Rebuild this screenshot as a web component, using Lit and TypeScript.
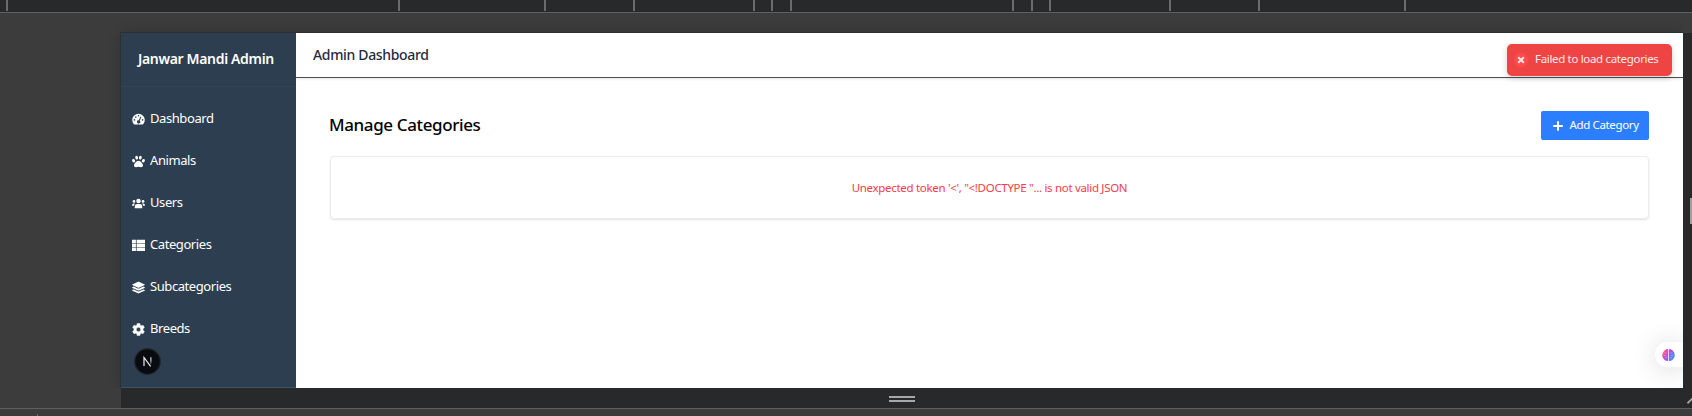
import { LitElement, html, css, svg } from "lit";
import { customElement } from "lit/decorators.js";

const TICKS = [6, 398, 544, 633, 753, 771, 790, 1012, 1031, 1049, 1169, 1258, 1404];

const ICONS: Record<string, unknown> = {
  gauge: svg`<path fill-rule="evenodd" d="M2 13.5A7.7 7.7 0 1 1 14 13.5Q13.600 14 13 14H3Q2.400 14 2 13.500ZM2 8.500a1 1 0 1 0 2 0a1 1 0 1 0-2 0M3.700 5a1 1 0 1 0 2 0a1 1 0 1 0-2 0M7 3.400a1 1 0 1 0 2 0a1 1 0 1 0-2 0M12 8.500a1 1 0 1 0 2 0a1 1 0 1 0-2 0M10.500 4.300L8.300 9A2 2 0 1 0 9.500 9.500L11.600 4.900Z"/>`,
  paw: svg`<ellipse cx="2" cy="7" rx="1.700" ry="2.200" transform="rotate(-22 2 7)"/><ellipse cx="5.700" cy="3.300" rx="1.700" ry="2.400" transform="rotate(-8 5.700 3.300)"/><ellipse cx="10.300" cy="3.300" rx="1.700" ry="2.400" transform="rotate(8 10.300 3.300)"/><ellipse cx="14" cy="7" rx="1.700" ry="2.200" transform="rotate(22 14 7)"/><path d="M8 7C5.500 7 2.500 10.500 2.500 13C2.500 15.600 5.500 15 8 14.500C10.500 15 13.500 15.600 13.500 13C13.500 10.500 10.500 7 8 7Z"/>`,
  users: svg`<circle cx="8" cy="5" r="2.800"/><circle cx="2.400" cy="5.500" r="1.700"/><circle cx="13.600" cy="5.500" r="1.700"/><path d="M3.400 13.800V12Q3.400 8.600 6.500 8.600H9.500Q12.600 8.600 12.600 12V13.800ZM0 10.700Q0 8 2 8H3.800Q2.600 9.300 2.400 10.700H0ZM16 10.700Q16 8 14 8H12.200Q13.400 9.300 13.600 10.700H16Z"/>`,
  list: svg`<path d="M0 1h4.800v4.100H0zM5.700 1H16v4.100H5.700zM0 5.900h4.800v4.100H0zM5.700 5.900H16v4.100H5.700zM0 10.800h4.800v4.100H0zM5.700 10.800H16v4.100H5.700z"/>`,
  layers: svg`<path d="M.4 4.200L7.500.9Q8 .7 8.500.9L15.600 4.200Q16.200 4.600 15.600 5L8.500 8.200Q8 8.400 7.500 8.200L.4 5Q-.2 4.600.4 4.200ZM.4 7.700L2.200 6.900L7 9.100Q8 9.500 9 9.100L13.800 6.900L15.600 7.700Q16.200 8.100 15.600 8.500L8.500 11.700Q8 11.900 7.500 11.700L.4 8.500Q-.2 8.100.4 7.700ZM.4 11.200L2.200 10.400L7 12.600Q8 13 9 12.600L13.800 10.400L15.600 11.200Q16.200 11.600 15.600 12L8.500 15.200Q8 15.400 7.500 15.200L.4 12Q-.2 11.600.4 11.200Z"/>`,
  gear: svg`<path fill-rule="evenodd" stroke="#fff" stroke-width=".6" stroke-linejoin="round" d="M6.400.5h3.200l.5 2.200 1.300.8 2.200-.7 1.600 2.800-1.700 1.600v1.600l1.700 1.600-1.600 2.800-2.200-.7-1.300.8-.5 2.200H6.400l-.5-2.200-1.300-.8-2.200.7-1.600-2.800 1.700-1.600V7.200L.8 5.600l1.600-2.800 2.200.7 1.300-.8ZM5.300 8a2.700 2.700 0 1 0 5.400 0a2.700 2.700 0 1 0-5.400 0"/>`,
};

const NAV = [
  { label: "Dashboard", icon: "gauge" },
  { label: "Animals", icon: "paw" },
  { label: "Users", icon: "users" },
  { label: "Categories", icon: "list" },
  { label: "Subcategories", icon: "layers" },
  { label: "Breeds", icon: "gear" },
];

@customElement("admin-sidebar")
class AdminSidebar extends LitElement {
  static styles = css`
    :host { display: flex; flex-direction: column; width: 175px; background: #2d3e50; color: #fff; box-sizing: border-box; border-bottom: 1px solid #3c5268; position: relative; }
    .brand { box-sizing: border-box; height: 54px; padding: 0 0 2px 17px; display: flex; align-items: center; border-bottom: 1px solid #344252; font-size: 14px; font-weight: 600; letter-spacing: -0.34px; white-space: nowrap; }
    nav { padding-top: 10px; }
    .item { height: 42px; padding-left: 11px; display: flex; align-items: center; gap: 5px; font-size: 13px; letter-spacing: -0.42px; }
    .item svg { width: 13px; height: 13px; fill: #fff; position: relative; top: 1px; }
    .dev { position: absolute; left: 13px; top: 315px; width: 27px; height: 27px; }
  `;
  render() {
    return html`<div class="brand">Janwar Mandi Admin</div>
      <nav>${NAV.map((n) => html`<div class="item"><svg viewBox="0 0 16 16">${ICONS[n.icon]}</svg><span>${n.label}</span></div>`)}</nav>
      <svg class="dev" viewBox="0 0 27 27">
        <defs><linearGradient id="n" gradientUnits="userSpaceOnUse" x1="0" y1="9" x2="0" y2="17"><stop offset=".4" stop-color="#ccc"/><stop offset="1" stop-color="#ccc" stop-opacity=".1"/></linearGradient></defs>
        <circle cx="13.500" cy="13.500" r="12.900" fill="#080b0f" stroke="#252a2e" stroke-width="1.200"/>
        <path d="M10 18V9.500L16.600 18.300" fill="none" stroke="#eee" stroke-width="1.200"/>
        <path d="M16.300 9.200h1.200v7.300h-1.200z" fill="url(#n)"/>
      </svg>`;
  }
}

@customElement("app-root")
class AppRoot extends LitElement {
  static styles = css`
    :host { display: flex; flex-direction: column; height: 416px; overflow: hidden; position: relative; background: #3c3c3c; font-family: "Noto Sans", "Open Sans", sans-serif; }
    .ruler { box-sizing: border-box; height: 13px; flex: none; background: #28292b; border-bottom: 1px solid #5f6060; position: relative; }
    .tick { position: absolute; top: 0; width: 2px; height: 11px; background: #6b6b6b; }
    .stage { display: grid; grid-template-columns: 1562px 9px; grid-template-rows: 355px 20px; margin: 20px 0 0 121px; flex: none; }
    .page { display: flex; background: #fff; position: relative; box-shadow: 0 0 0 1px #2f2f30, 0 0 12px rgba(0,0,0,.18); clip-path: inset(-14px 0 0 -14px); }
    .main { flex: 1; min-width: 0; position: relative; overflow: hidden; }
    header { box-sizing: border-box; height: 45px; border-bottom: 1px solid #4b4c4c; padding: 0 0 1px 17px; display: flex; align-items: center; font-size: 14px; font-weight: 500; color: #1f2c3e; letter-spacing: -0.34px; box-shadow: 0 1px 3px rgba(0,0,0,.1); }
    .content { padding: 33px 34px 0; }
    .bar { display: flex; justify-content: space-between; height: 45px; align-items: flex-start; }
    h1 { margin: 0 0 0 -1px; font-size: 17px; line-height: 27px; font-weight: 500; color: #000; letter-spacing: -0.38px; }
    .add { box-sizing: border-box; width: 108.5px; height: 28.5px; border-radius: 2px; background: #2b7fff; color: #fff; font-size: 11.5px; letter-spacing: -0.36px; display: flex; align-items: center; padding: 0 0 2px 12px; gap: 7px; white-space: nowrap; }
    .add svg { width: 10px; height: 10px; position: relative; top: 2px; }
    .card { box-sizing: border-box; height: 63px; border: 1px solid #ececec; border-radius: 4px; box-shadow: 0 1px 2px rgba(0,0,0,.12); display: flex; align-items: center; justify-content: center; padding-bottom: 1px; color: #fb3b45; font-size: 11.5px; letter-spacing: -0.31px; white-space: nowrap; }
    .toast { position: absolute; right: 11px; top: 11px; width: 165px; height: 32px; box-sizing: border-box; border-radius: 5px; background: #ef4444; color: #fdebeb; font-size: 11.5px; letter-spacing: -0.33px; display: flex; align-items: center; gap: 7px; padding: 0 0 3px 7px; white-space: nowrap; box-shadow: 0 2px 6px rgba(0,0,0,.18); }
    .toast svg { width: 14px; height: 14px; position: relative; top: 1px; flex: none; }
    .brain { position: absolute; right: 0; top: 309px; width: 28px; height: 25px; border-radius: 13px 0 0 13px; background: #fff; box-shadow: 0 2px 26px rgba(0,0,0,.16); display: flex; align-items: center; padding-left: 7px; box-sizing: border-box; }
    .brain svg { width: 13px; height: 14px; }
    .side { background: #28292b; display: flex; align-items: center; justify-content: flex-end; }
    .grip { width: 2px; height: 26px; background: #a0a0a0; margin-top: 1px; }
    .bottom { grid-column: 1 / 3; background: #28292b; position: relative; display: flex; flex-direction: column; align-items: center; gap: 2px; padding: 8px 9px 0 0; }
    .line { width: 26px; height: 2px; background: #a7a7a7; }
    .corner { position: absolute; right: 0; top: 9px; width: 5px; height: 7px; }
    .foot { flex: 1; border-top: 1px solid #5f6060; }
    .foot i { display: block; width: 1px; height: 2px; background: #6b6b6b; margin: 5px 0 0 37px; }
  `;
  render() {
    return html`<div class="ruler">${TICKS.map((x) => html`<i class="tick" style="left:${x}px"></i>`)}</div>
      <div class="stage">
        <div class="page">
          <admin-sidebar></admin-sidebar>
          <div class="main">
            <header>Admin Dashboard</header>
            <div class="content">
              <div class="bar"><h1>Manage Categories</h1>
                <div class="add"><svg viewBox="0 0 10 10"><path d="M5 .2v9.600M.2 5h9.600" stroke="#fff" stroke-width="2"/></svg><span>Add Category</span></div>
              </div>
              <div class="card"><span>Unexpected token '&lt;', "&lt;!DOCTYPE "... is not valid JSON</span></div>
            </div>
            <div class="toast"><svg viewBox="0 0 14 14"><circle cx="7" cy="7" r="7" fill="#ff4b4b"/><path d="M4.200 4.200l5.600 5.600M9.800 4.200L4.200 9.800" stroke="#ffe6e6" stroke-width="2"/></svg><span>Failed to load categories</span></div>
            <div class="brain"><svg viewBox="0 0 14 14">
              <defs><linearGradient id="b" gradientUnits="userSpaceOnUse" x1="0" y1="2" x2="14" y2="10"><stop offset="0" stop-color="#ffa23c"/><stop offset=".28" stop-color="#ee45b4"/><stop offset=".58" stop-color="#8a5cf0"/><stop offset="1" stop-color="#35a0ff"/></linearGradient></defs>
              <path fill="url(#b)" d="M6.600 1.200Q5 0 3.800 1.500Q2 1.400 1.800 3.200Q.4 4 .8 5.600Q-.4 7 .6 8.600Q.4 10.600 2 11Q2.400 13 4.200 12.800Q5.600 14 6.600 12.800ZM7.400 1.200Q9 0 10.200 1.500Q12 1.400 12.200 3.200Q13.600 4 13.200 5.600Q14.400 7 13.400 8.600Q13.600 10.600 12 11Q11.600 13 9.800 12.800Q8.400 14 7.400 12.800Z"/>
              <path d="M3 4.500Q4 5.500 5 4.500M2 7.500H4.500M3.500 10Q4.500 9 5.500 10M11 4.500Q10 5.500 9 4.500M12 7.500H9.500M10.500 10Q9.500 9 8.500 10" fill="none" stroke="#fff" stroke-opacity=".6" stroke-width=".6"/>
            </svg></div>
          </div>
        </div>
        <div class="side"><div class="grip"></div></div>
        <div class="bottom"><div class="line"></div><div class="line"></div>
          <svg class="corner" viewBox="0 0 5 7"><path d="M.5 6.300L5.500 1.300" stroke="#a7a7a7" stroke-width="1.800"/></svg></div>
      </div>
      <div class="foot"><i></i></div>`;
  }
}
